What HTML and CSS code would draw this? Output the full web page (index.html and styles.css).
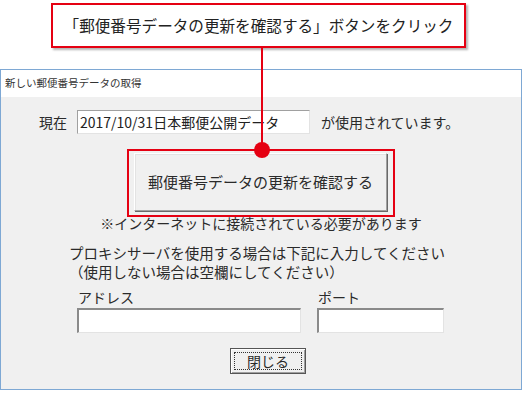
FILE: index.html
```html
<!DOCTYPE html>
<html lang="ja">
<head>
    <meta charset="UTF-8">
    <title>新しい郵便番号データの取得</title>
    <link rel="stylesheet" href="styles.css">
</head>
<body>
    <div class="page">
        <!-- 説明の吹き出し -->
        <div class="callout">「郵便番号データの更新を確認する」ボタンをクリック</div>
        <div class="connector"></div>
        <div class="connector-dot"></div>

        <div class="dialog">
            <div class="dialog-title">新しい郵便番号データの取得</div>
            <div class="dialog-body">
                <div class="current-row">
                    <span>現在</span>
                    <div class="field field-current">2017/10/31日本郵便公開データ</div>
                    <span>が使用されています。</span>
                </div>

                <div class="highlight">
                    <button class="btn btn-update">郵便番号データの更新を確認する</button>
                </div>

                <p class="note">※インターネットに接続されている必要があります</p>

                <p class="proxy-text">プロキシサーバを使用する場合は下記に入力してください<br>（使用しない場合は空欄にしてください）</p>

                <div class="proxy-fields">
                    <label class="proxy-col">
                        <span class="proxy-label">アドレス</span>
                        <span class="field field-address"></span>
                    </label>
                    <label class="proxy-col">
                        <span class="proxy-label">ポート</span>
                        <span class="field field-port"></span>
                    </label>
                </div>

                <button class="btn btn-close"><span class="focus-ring">閉じる</span></button>
            </div>
        </div>
    </div>
</body>
</html>
```

FILE: styles.css
```css
body {
    margin: 0;
    padding: 0;
    background: #ffffff;
    font-family: "Noto Sans CJK JP", sans-serif;
    color: #222;
}
.page {
    position: relative;
    width: 522px;
    height: 393px;
    padding-top: 3px;
    box-sizing: border-box;
}

/* Callout */
.callout {
    margin-left: 51px;
    width: 415px;
    height: 45px;
    box-sizing: border-box;
    border: 2px solid #e50012;
    background: #fff;
    box-shadow: 2px 2px 2px rgba(0, 0, 0, 0.3);
    font-size: 15.6px;
    line-height: 41px;
    text-align: center;
    letter-spacing: 0;
    color: #222;
}
.connector {
    position: absolute;
    left: 261px;
    top: 48px;
    width: 2px;
    height: 102px;
    background: #e50012;
    z-index: 2;
}
.connector-dot {
    position: absolute;
    left: 254px;
    top: 142px;
    width: 16px;
    height: 16px;
    border-radius: 50%;
    background: #e50012;
    z-index: 2;
}

/* Dialog */
.dialog {
    margin-top: 21px;
    width: 522px;
    box-sizing: border-box;
    border: 1px solid #7ea8d4;
}
.dialog-title {
    height: 27px;
    background: #fff;
    font-size: 10.5px;
    line-height: 26px;
    padding-left: 4px;
    color: #333;
}
.dialog-body {
    background: #f0f0f0;
    height: 292px;
    padding-top: 13px;
    box-sizing: border-box;
    font-size: 14px;
    color: #2a2a2a;
}

.current-row {
    display: flex;
    align-items: center;
    height: 24px;
    padding-left: 38px;
    line-height: 24px;
}
.field {
    display: block;
    box-sizing: border-box;
    background: #fff;
    border-top: 1px solid #a0a0a0;
    border-left: 1px solid #a0a0a0;
    border-right: 1px solid #e3e3e3;
    border-bottom: 1px solid #e3e3e3;
}
.field-current {
    width: 233px;
    height: 24px;
    margin: 0 11px 0 10px;
    padding-left: 2px;
    line-height: 22px;
    font-size: 14px;
    color: #222;
    white-space: nowrap;
    overflow: hidden;
}

.highlight {
    width: 268px;
    margin: 15px auto 0;
    padding: 2px 5px 4px;
    box-sizing: border-box;
    border: 2px solid #e50012;
}
.btn {
    display: block;
    font-family: "Noto Sans CJK JP", sans-serif;
    color: #2a2a2a;
    background: #f0f0f0;
    box-sizing: border-box;
    padding: 0;
    border-top: 1px solid #ffffff;
    border-left: 1px solid #ffffff;
    border-right: 1px solid #a0a0a0;
    border-bottom: 1px solid #a0a0a0;
    box-shadow: 1px 1px 0 #696969, inset 1px 1px 0 #e3e3e3;
}
.btn-update {
    width: 253px;
    height: 58px;
    font-size: 15px;
    line-height: 56px;
}

.note {
    margin: -2px 0 0;
    text-align: center;
    line-height: 16px;
}
.proxy-text {
    margin: 12px 0 0;
    padding-left: 68px;
    line-height: 19px;
    font-size: 14.5px;
}

.proxy-fields {
    display: flex;
    gap: 16px;
    padding-left: 76px;
    margin-top: 7px;
}
.proxy-col {
    display: flex;
    flex-direction: column;
}
.proxy-label {
    line-height: 19px;
    padding-left: 1px;
}
.field-address,
.field-port {
    margin-top: 1px;
    height: 25px;
    border-top: 2px solid #8a8a8a;
    border-left: 2px solid #8a8a8a;
}
.field-address {
    width: 224px;
}
.field-port {
    width: 127px;
}

.btn-close {
    margin: 15px 0 0 229px;
    width: 76px;
    height: 26px;
    padding: 3px;
    border: 1px solid #555;
    box-shadow: inset 1px 1px 0 #fff, inset -1px -1px 0 #a0a0a0;
    font-size: 14px;
}
.focus-ring {
    display: block;
    height: 18px;
    line-height: 17px;
    border: 1px dotted #333;
    box-sizing: border-box;
}
```
